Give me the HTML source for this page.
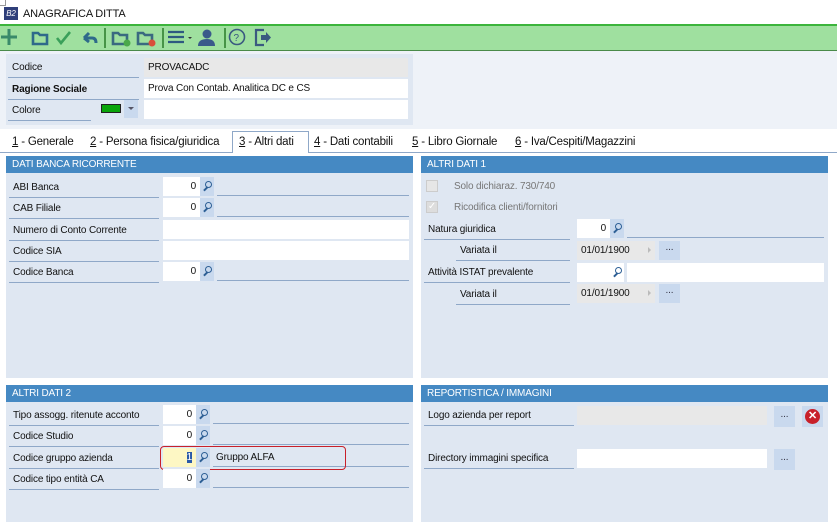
<!DOCTYPE html><html><head><meta charset="utf-8"><style>
*{box-sizing:border-box;margin:0;padding:0}
body{width:837px;height:522px;overflow:hidden;background:#fff;font-family:"Liberation Sans",sans-serif;font-size:10px;letter-spacing:-0.15px;color:#111;position:relative}
.a{position:absolute}
.lbl{position:absolute;border-bottom:1px solid #8fa8c8;padding-left:4px;line-height:20px;height:20px;white-space:nowrap}
.in{position:absolute;background:#fff;height:19px;line-height:19px;padding:0 4px;white-space:nowrap}
.num{text-align:right}
.mag{position:absolute;width:14px;height:19px;background:#c9d9ee}
.mag:after{content:"";position:absolute;left:5px;top:4px;width:5px;height:5px;border:1.5px solid #2d5f95;border-radius:50%}
.mag:before{content:"";position:absolute;left:3px;top:11px;width:5px;height:1.5px;background:#2d5f95;transform:rotate(-45deg)}
.line{position:absolute;border-bottom:1px solid #8fa8c8;height:19px}
.panel{position:absolute;background:#dfe7f2}
.hd{position:absolute;left:0;right:0;top:0;height:17px;background:#4589c3;color:#fff;line-height:18px;padding-left:6px;font-size:10px}
.btn{position:absolute;width:21px;height:19px;background:#c9d9ee;text-align:center;line-height:14px;color:#334}
.tab{position:absolute;top:132px;height:21px;line-height:21px;font-size:11.5px;letter-spacing:-0.2px;white-space:nowrap}
</style></head><body>
<div class="a" style="left:0;top:0;width:6px;height:6px;border-right:1px solid #999;border-bottom:1px solid #999"></div>
<div class="a" style="left:4px;top:7px;width:14px;height:13px;background:#2f3f7a;color:#fff;font-size:8px;line-height:13px;text-align:center;font-style:italic">B2</div>
<div class="a" style="left:23px;top:6px;font-size:11px;line-height:16px">ANAGRAFICA DITTA</div>
<div class="a" style="left:0;top:24px;width:837px;height:27px;background:#9fe09f;border-top:2px solid #3cb43c;border-bottom:1px solid #4a8a4a"></div>
<svg class="a" style="left:0;top:25px" width="280" height="25" viewBox="0 0 280 25">
<g fill="none" stroke="#2e6a8a" stroke-width="3">
<path d="M9 4v16M1 12h16" stroke="#3a8a6a"/>
<path d="M33 8h5l2 2h7v9H33z" stroke-width="2.6"/>
<path d="M57 13l4 5 9-11" stroke="#3aa05a" stroke-width="2.6"/>
<path d="M84 13h8q4 0 4 5M84 13l5-5M84 13l5 4" stroke-width="3"/>
</g>
<path d="M105 3v20M163 3v20M225 3v20" stroke="#2a7a2a" stroke-width="1.5"/>
<g fill="none" stroke="#3a6a80" stroke-width="2.6"><path d="M113 8h5l2 2h7v9h-14z"/><path d="M138 8h5l2 2h7v9h-14z"/></g>
<circle cx="127" cy="18" r="3.5" fill="#4aa84a"/><circle cx="152" cy="18" r="3.5" fill="#d8503a"/>
<g stroke="#2e5a80" stroke-width="2.2"><path d="M168 7h16M168 12h16M168 17h16"/></g>
<path d="M188 12h4l-2 2z" fill="#333"/>
<circle cx="207" cy="9" r="4.5" fill="#3a5a8a"/><path d="M198 21q0-7 9-7q8 0 8 7z" fill="#3a5a8a"/>
<circle cx="237" cy="12" r="7.5" fill="none" stroke="#3a5a80" stroke-width="1.6"/><text x="233.5" y="16" font-size="10" fill="#3a5a80" font-family="Liberation Sans">?</text>
<path d="M264 5h-8v15h8" fill="none" stroke="#3a5a80" stroke-width="2.2"/><path d="M261 10h5v-3l5 5.5-5 5.5v-3h-5z" fill="#3a5a80"/>
</svg>
<div class="a" style="left:0;top:51px;width:837px;height:78px;background:#eef2f8"></div>
<div class="panel" style="left:6px;top:54px;width:407px;height:71px"></div>
<div class="lbl" style="left:8px;top:58px;width:131px">Codice</div>
<div class="in" style="left:144px;top:58px;width:264px;background:#e8e8e8">PROVACADC</div>
<div class="lbl" style="left:8px;top:80px;width:131px;font-weight:bold">Ragione Sociale</div>
<div class="in" style="left:144px;top:79px;width:264px">Prova Con Contab. Analitica DC e CS</div>
<div class="lbl" style="left:8px;top:101px;width:83px">Colore</div>
<div class="a" style="left:101px;top:104px;width:20px;height:9px;background:#0aa50a;border:1px solid #222"></div>
<div class="a" style="left:124px;top:100px;width:14px;height:18px;background:#c9d9ee"></div>
<div class="a" style="left:128px;top:107px;border-left:3px solid transparent;border-right:3px solid transparent;border-top:3px solid #556"></div>
<div class="in" style="left:144px;top:100px;width:264px"></div>
<div class="a" style="left:0;top:152px;width:837px;border-top:1px solid #8fa8c8"></div>
<div class="a" style="left:232px;top:131px;width:77px;height:22px;background:#fff;border:1px solid #8fa8c8;border-bottom:none"></div>
<div class="tab" style="left:12px"><u>1</u> - Generale</div>
<div class="tab" style="left:90px"><u>2</u> - Persona fisica/giuridica</div>
<div class="tab" style="left:239px"><u>3</u> - Altri dati</div>
<div class="tab" style="left:314px"><u>4</u> - Dati contabili</div>
<div class="tab" style="left:412px"><u>5</u> - Libro Giornale</div>
<div class="tab" style="left:515px"><u>6</u> - Iva/Cespiti/Magazzini</div>

<div class="panel" style="left:6px;top:156px;width:407px;height:222px"><div class="hd">DATI BANCA RICORRENTE</div></div>
<div class="lbl" style="left:9px;top:178px;width:150px">ABI Banca</div><div class="in num" style="left:163px;top:177px;width:37px">0</div><div class="mag" style="left:200px;top:177px"></div><div class="line" style="left:217px;top:177px;width:192px"></div>
<div class="lbl" style="left:9px;top:199px;width:150px">CAB Filiale</div><div class="in num" style="left:163px;top:198px;width:37px">0</div><div class="mag" style="left:200px;top:198px"></div><div class="line" style="left:217px;top:198px;width:192px"></div>
<div class="lbl" style="left:9px;top:221px;width:150px">Numero di Conto Corrente</div><div class="in" style="left:163px;top:220px;width:246px"></div>
<div class="lbl" style="left:9px;top:242px;width:150px">Codice SIA</div><div class="in" style="left:163px;top:241px;width:246px"></div>
<div class="lbl" style="left:9px;top:263px;width:150px">Codice Banca</div><div class="in num" style="left:163px;top:262px;width:37px">0</div><div class="mag" style="left:200px;top:262px"></div><div class="line" style="left:217px;top:262px;width:192px"></div>

<div class="panel" style="left:421px;top:156px;width:407px;height:222px;color:#777"><div class="hd">ALTRI DATI 1</div>
<div class="a" style="left:5px;top:24px;width:12px;height:12px;background:#e6e6e6;border:1px solid #ccc"></div><div class="a" style="left:33px;top:25px">Solo dichiaraz. 730/740</div>
<div class="a" style="left:5px;top:45px;width:12px;height:12px;background:#ddd;border:1px solid #ccc;color:#fff;font-size:10px;line-height:10px;text-align:center">✓</div><div class="a" style="left:33px;top:46px">Ricodifica clienti/fornitori</div></div>
<div class="lbl" style="left:424px;top:220px;width:146px">Natura giuridica</div><div class="in num" style="left:577px;top:219px;width:33px">0</div><div class="mag" style="left:610px;top:219px"></div><div class="line" style="left:627px;top:219px;width:197px"></div>
<div class="lbl" style="left:456px;top:241px;width:114px">Variata il</div><div class="in" style="left:577px;top:241px;width:78px;background:#e8e8e8">01/01/1900</div><div class="a" style="left:648px;top:247px;border-left:3px solid #bbb;border-top:3px solid transparent;border-bottom:3px solid transparent"></div><div class="btn" style="left:659px;top:241px">...</div>
<div class="lbl" style="left:424px;top:263px;width:146px">Attività ISTAT prevalente</div><div class="in" style="left:577px;top:263px;width:33px"></div><div class="mag" style="left:610px;top:263px;background:#fff"></div><div class="in" style="left:627px;top:263px;width:197px"></div>
<div class="lbl" style="left:456px;top:285px;width:114px">Variata il</div><div class="in" style="left:577px;top:284px;width:78px;background:#e8e8e8">01/01/1900</div><div class="a" style="left:648px;top:290px;border-left:3px solid #bbb;border-top:3px solid transparent;border-bottom:3px solid transparent"></div><div class="btn" style="left:659px;top:284px">...</div>

<div class="panel" style="left:6px;top:385px;width:407px;height:137px"><div class="hd">ALTRI DATI 2</div></div>
<div class="lbl" style="left:9px;top:406px;width:150px">Tipo assogg. ritenute acconto</div><div class="in num" style="left:163px;top:405px;width:33px">0</div><div class="mag" style="left:196px;top:405px"></div><div class="line" style="left:213px;top:405px;width:196px"></div>
<div class="lbl" style="left:9px;top:427px;width:150px">Codice Studio</div><div class="in num" style="left:163px;top:426px;width:33px">0</div><div class="mag" style="left:196px;top:426px"></div><div class="line" style="left:213px;top:426px;width:196px"></div>
<div class="lbl" style="left:9px;top:449px;width:150px">Codice gruppo azienda</div><div class="in num" style="left:163px;top:448px;width:33px;background:#fdf7c4"><span style="background:#2a5aa8;color:#fff">1</span></div><div class="mag" style="left:196px;top:448px"></div><div class="line" style="left:213px;top:448px;width:196px;padding-left:3px;line-height:20px">Gruppo ALFA</div>
<div class="a" style="left:160px;top:446px;width:186px;height:24px;border:1px solid #c8202a;border-radius:4px"></div>
<div class="lbl" style="left:9px;top:470px;width:150px">Codice tipo entità CA</div><div class="in num" style="left:163px;top:469px;width:33px">0</div><div class="mag" style="left:196px;top:469px"></div><div class="line" style="left:213px;top:469px;width:196px"></div>

<div class="panel" style="left:421px;top:385px;width:407px;height:137px"><div class="hd">REPORTISTICA / IMMAGINI</div></div>
<div class="lbl" style="left:424px;top:406px;width:150px">Logo azienda per report</div><div class="in" style="left:577px;top:406px;width:190px;background:#e8e8e8"></div><div class="btn" style="left:774px;top:406px;height:21px;line-height:18px">...</div>
<div class="btn" style="left:802px;top:406px;height:21px"><div class="a" style="left:3px;top:3px;width:15px;height:15px;border-radius:50%;background:#c8202a;color:#fff;font-weight:bold;font-size:11px;line-height:15px">✕</div></div>
<div class="lbl" style="left:424px;top:449px;width:150px">Directory immagini specifica</div><div class="in" style="left:577px;top:449px;width:190px"></div><div class="btn" style="left:774px;top:449px;height:21px;line-height:18px">...</div>
</body></html>
